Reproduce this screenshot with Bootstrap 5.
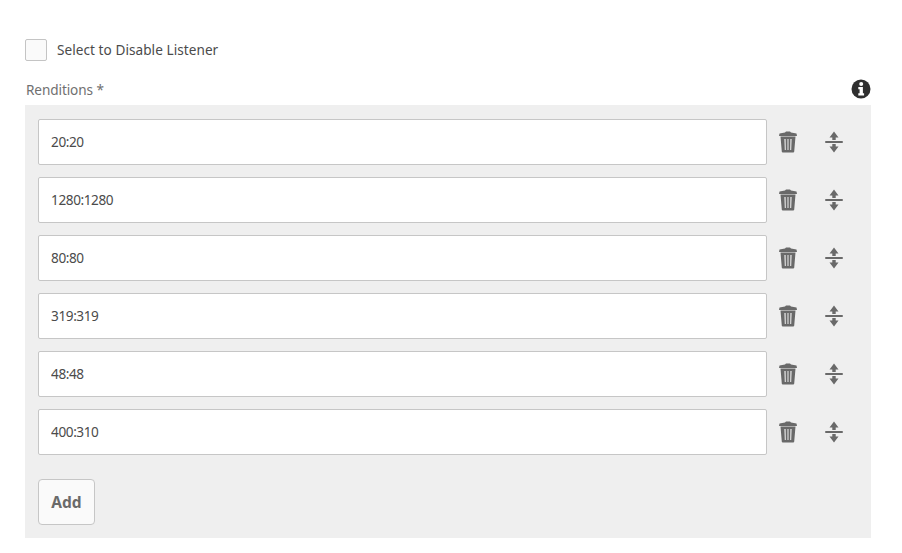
<!DOCTYPE html>
<html lang="en">
<head>
<meta charset="utf-8">
<title>Renditions</title>
<link rel="stylesheet" href="https://cdn.jsdelivr.net/npm/bootstrap@5.3.0/dist/css/bootstrap.min.css">
<style>
html,body{height:100%;overflow:hidden}
body{background:#fff;font-family:"Noto Sans","Open Sans",sans-serif;font-size:14px;color:#4b4b4b}
.page-wrap{padding:39px 31px 0 25px}
.disable-box{width:22px;height:22px;margin:0;border:1px solid #c4c4c4;border-radius:2px;background:#fafafa;appearance:none;flex:none}
.disable-row{gap:10px;height:22px}
.disable-row label{font-size:13.6px;color:#4b4b4b;letter-spacing:.05px}
.head-row{margin-top:15px;height:25px;margin-bottom:4px}
.head-row span{font-size:13.6px;color:#707070;letter-spacing:-.1px;margin-left:1px;padding-top:4px}
.panel-rend{background:#efefef;padding:14px 13px 13px;height:433px}
.rend-row{height:46px;margin-bottom:12px}
.rend-input{width:729px;height:46px;flex:none;border:1.5px solid #c6c6c6;border-radius:2px;background:#fff;padding:0 12px 2px;font-size:13.6px;color:#4b4b4b;letter-spacing:-.4px;font-family:inherit;outline:0}
.tool-icons{margin-left:12px;gap:28px}
.tool-trash{width:18px;height:22px;display:block}
.tool-move{width:18px;height:22px;display:block}
.add-btn{margin-top:12px;width:57px;height:46px;padding:2px 0 0;border:1.5px solid #c6c6c6;border-radius:4px;background:#fafafa;color:#6a6a6a;font-weight:700;font-size:15.500px}
.info-ic{width:20px;height:20px;display:block}
</style>
</head>
<body>
<div class="page-wrap">
  <div class="d-flex align-items-center disable-row">
    <input class="disable-box" type="checkbox" id="dis">
    <label for="dis">Select to Disable Listener</label>
  </div>
  <div class="d-flex justify-content-between align-items-center head-row">
    <span>Renditions *</span>
    <svg class="info-ic" viewBox="0 0 20 20"><circle cx="10" cy="10" r="9.5" fill="#2f2f2f"/><circle cx="10.200" cy="5" r="2" fill="#fff"/><path d="M7.300 8h4.600v6.300h1.200v2.200H7.300v-2.200h1.300v-4H7.300z" fill="#fff"/></svg>
  </div>
  <div class="panel-rend">
    <div class="d-flex align-items-center rend-row"><input class="rend-input" type="text" value="20:20"><div class="d-flex align-items-center tool-icons"><svg class="tool-trash" viewBox="0 0 18 22"><use href="#ic-trash"/></svg><svg class="tool-move" viewBox="0 0 18 22"><use href="#ic-move"/></svg></div></div>
    <div class="d-flex align-items-center rend-row"><input class="rend-input" type="text" value="1280:1280"><div class="d-flex align-items-center tool-icons"><svg class="tool-trash" viewBox="0 0 18 22"><use href="#ic-trash"/></svg><svg class="tool-move" viewBox="0 0 18 22"><use href="#ic-move"/></svg></div></div>
    <div class="d-flex align-items-center rend-row"><input class="rend-input" type="text" value="80:80"><div class="d-flex align-items-center tool-icons"><svg class="tool-trash" viewBox="0 0 18 22"><use href="#ic-trash"/></svg><svg class="tool-move" viewBox="0 0 18 22"><use href="#ic-move"/></svg></div></div>
    <div class="d-flex align-items-center rend-row"><input class="rend-input" type="text" value="319:319"><div class="d-flex align-items-center tool-icons"><svg class="tool-trash" viewBox="0 0 18 22"><use href="#ic-trash"/></svg><svg class="tool-move" viewBox="0 0 18 22"><use href="#ic-move"/></svg></div></div>
    <div class="d-flex align-items-center rend-row"><input class="rend-input" type="text" value="48:48"><div class="d-flex align-items-center tool-icons"><svg class="tool-trash" viewBox="0 0 18 22"><use href="#ic-trash"/></svg><svg class="tool-move" viewBox="0 0 18 22"><use href="#ic-move"/></svg></div></div>
    <div class="d-flex align-items-center rend-row"><input class="rend-input" type="text" value="400:310"><div class="d-flex align-items-center tool-icons"><svg class="tool-trash" viewBox="0 0 18 22"><use href="#ic-trash"/></svg><svg class="tool-move" viewBox="0 0 18 22"><use href="#ic-move"/></svg></div></div>
    <button type="button" class="btn add-btn">Add</button>
  </div>
</div>
<svg width="0" height="0" class="d-block">
  <defs>
    <g id="ic-trash" fill="#696969">
      <path d="M6 1.500 7 .5h4l1 1 5.500 1 .5 2.500H0l.5-2.500z"/>
      <path fill-rule="evenodd" d="M1.500 5.500h15l-1.300 15.200a1 1 0 0 1-1 .8H3.800a1 1 0 0 1-1-.8zM5.400 8l.4 11h1l-.2-11zM8.500 8v11h1V8zM11.400 8l-.2 11h1l.4-11z"/>
    </g>
    <g id="ic-move" fill="#696969">
      <rect x="0" y="10" width="18" height="2" rx="1"/>
      <path d="M7.300 9V6.500H4.500L9 .5l4.500 6h-2.800V9z"/>
      <path d="M7.300 13v2.500H4.500L9 21.500l4.500-6h-2.800V13z"/>
    </g>
  </defs>
</svg>
<script src="https://cdn.jsdelivr.net/npm/bootstrap@5.3.0/dist/js/bootstrap.bundle.min.js"></script>
</body>
</html>
